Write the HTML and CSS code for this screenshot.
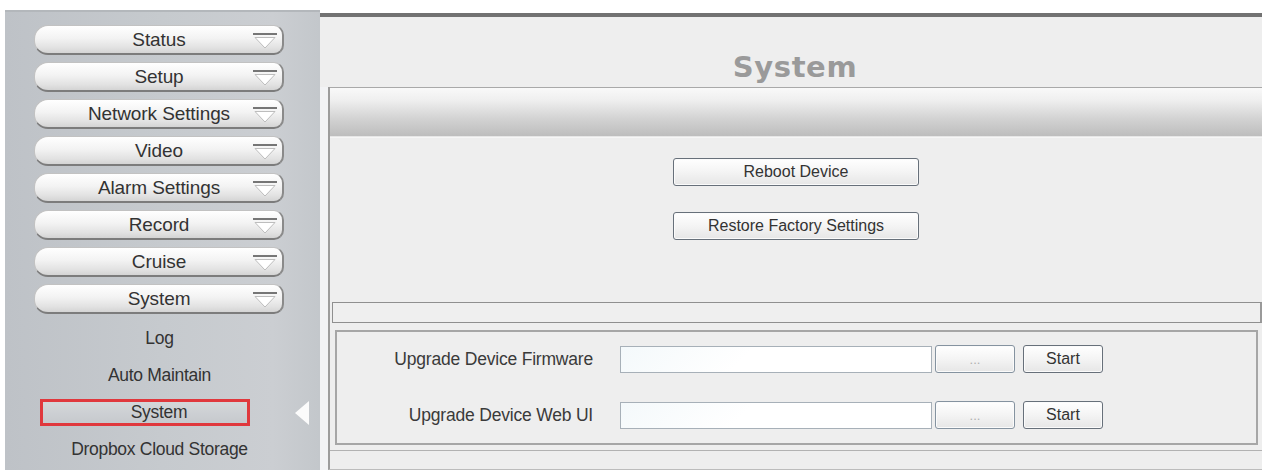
FILE: index.html
```html
<!DOCTYPE html>
<html>
<head>
<meta charset="utf-8">
<title>System</title>
<link rel="stylesheet" href="styles.css">
</head>
<body>
<div class="layout">
  <nav class="sidebar">
    <div class="menu">
      <div class="menu-btn"><span class="menu-label">Status</span><svg class="menu-ico" viewBox="0 0 24 16" width="24" height="16"><line x1="0" y1="1" x2="24" y2="1" stroke="#555" stroke-width="1.6"/><polygon points="2,4.5 22,4.5 12,15" fill="#fff" stroke="#bdbdbd" stroke-width="1"/></svg></div>
      <div class="menu-btn"><span class="menu-label">Setup</span><svg class="menu-ico" viewBox="0 0 24 16" width="24" height="16"><line x1="0" y1="1" x2="24" y2="1" stroke="#555" stroke-width="1.6"/><polygon points="2,4.5 22,4.5 12,15" fill="#fff" stroke="#bdbdbd" stroke-width="1"/></svg></div>
      <div class="menu-btn"><span class="menu-label">Network Settings</span><svg class="menu-ico" viewBox="0 0 24 16" width="24" height="16"><line x1="0" y1="1" x2="24" y2="1" stroke="#555" stroke-width="1.6"/><polygon points="2,4.5 22,4.5 12,15" fill="#fff" stroke="#bdbdbd" stroke-width="1"/></svg></div>
      <div class="menu-btn"><span class="menu-label">Video</span><svg class="menu-ico" viewBox="0 0 24 16" width="24" height="16"><line x1="0" y1="1" x2="24" y2="1" stroke="#555" stroke-width="1.6"/><polygon points="2,4.5 22,4.5 12,15" fill="#fff" stroke="#bdbdbd" stroke-width="1"/></svg></div>
      <div class="menu-btn"><span class="menu-label">Alarm Settings</span><svg class="menu-ico" viewBox="0 0 24 16" width="24" height="16"><line x1="0" y1="1" x2="24" y2="1" stroke="#555" stroke-width="1.6"/><polygon points="2,4.5 22,4.5 12,15" fill="#fff" stroke="#bdbdbd" stroke-width="1"/></svg></div>
      <div class="menu-btn"><span class="menu-label">Record</span><svg class="menu-ico" viewBox="0 0 24 16" width="24" height="16"><line x1="0" y1="1" x2="24" y2="1" stroke="#555" stroke-width="1.6"/><polygon points="2,4.5 22,4.5 12,15" fill="#fff" stroke="#bdbdbd" stroke-width="1"/></svg></div>
      <div class="menu-btn"><span class="menu-label">Cruise</span><svg class="menu-ico" viewBox="0 0 24 16" width="24" height="16"><line x1="0" y1="1" x2="24" y2="1" stroke="#555" stroke-width="1.6"/><polygon points="2,4.5 22,4.5 12,15" fill="#fff" stroke="#bdbdbd" stroke-width="1"/></svg></div>
      <div class="menu-btn"><span class="menu-label">System</span><svg class="menu-ico" viewBox="0 0 24 16" width="24" height="16"><line x1="0" y1="1" x2="24" y2="1" stroke="#555" stroke-width="1.6"/><polygon points="2,4.5 22,4.5 12,15" fill="#fff" stroke="#bdbdbd" stroke-width="1"/></svg></div>
    </div>
    <div class="submenu">
      <div class="sub-item">Log</div>
      <div class="sub-item">Auto Maintain</div>
      <div class="sub-item sub-row">
        <div class="sub-active">System</div>
        <svg class="pointer" viewBox="0 0 14 26" width="14" height="26"><polygon points="0,13 14,1 14,25" fill="#fbfbfb"/></svg>
      </div>
      <div class="sub-item">Dropbox Cloud Storage</div>
    </div>
  </nav>
  <main class="main">
    <h1 class="title">System</h1>
    <div class="body">
      <div class="content">
        <div class="header-bar"></div>
        <section class="actions">
          <button class="btn btn-wide">Reboot Device</button>
          <button class="btn btn-wide">Restore Factory Settings</button>
        </section>
        <div class="bar"></div>
        <section class="upgrade">
          <div class="up-row">
            <span class="up-label">Upgrade Device Firmware</span>
            <input class="up-input" type="text">
            <button class="btn btn-browse">...</button>
            <button class="btn btn-start">Start</button>
          </div>
          <div class="up-row">
            <span class="up-label">Upgrade Device Web UI</span>
            <input class="up-input" type="text">
            <button class="btn btn-browse">...</button>
            <button class="btn btn-start">Start</button>
          </div>
        </section>
        <div class="foot"></div>
      </div>
    </div>
  </main>
</div>
</body>
</html>
```

FILE: styles.css
```css
* { box-sizing: border-box; }
html, body { margin: 0; padding: 0; background: #ffffff; }
body { font-family: "Liberation Sans", Arial, sans-serif; color: #333; }

.layout {
  display: flex;
  padding: 10px 0 0 5px;
  height: 470px;
}

/* Sidebar */
.sidebar {
  width: 315px;
  height: 460px;
  border-top: 2px solid #b3b7bb;
  background: linear-gradient(90deg, #bec2c7 0%, #c6cace 50%, #cbced2 85%, #c3c7cb 100%);
  padding: 13px 0 0 0;
  display: flex;
  flex-direction: column;
}
.menu {
  display: flex;
  flex-direction: column;
  gap: 7px;
  padding-left: 29px;
}
.menu-btn {
  width: 250px;
  height: 30px;
  border-radius: 14px 10px 10px 14px;
  background: linear-gradient(180deg, #ffffff 0%, #f3f3f3 45%, #e2e2e2 80%, #d4d4d4 100%);
  border: 1px solid #c2c2c2;
  border-bottom: 2px solid #7c7c7c;
  border-right: 2px solid #8a8a8a;
  display: flex;
  align-items: center;
}
.menu-label {
  flex: 1;
  text-align: center;
  font-size: 19px;
  color: #333;
  padding-left: 34px;
  letter-spacing: -0.1px;
}
.menu-ico {
  flex: none;
  margin: 0 5px 0 4px;
  align-self: flex-start;
  margin-top: 7px;
}
.submenu {
  display: flex;
  flex-direction: column;
  margin-top: 6px;
}
.sub-item {
  height: 37px;
  width: 315px;
  display: flex;
  align-items: center;
  justify-content: center;
  padding-right: 6px;
  font-size: 17.5px;
  color: #333;
  letter-spacing: -0.3px;
}
.sub-row {
  justify-content: space-between;
  padding-left: 35px;
  padding-right: 11px;
}
.sub-active {
  width: 210px;
  height: 27px;
  border: 3px solid #e0383d;
  display: flex;
  align-items: center;
  justify-content: center;
  padding-left: 28px;
  font-size: 17.5px;
  color: #333;
  background: linear-gradient(180deg, #d4d7da, #c6c9cd);
}
.pointer { flex: none; }

/* Main */
.main {
  width: 942px;
  height: 457px;
  margin-top: 3px;
  border-top: 4px solid #727272;
  background: #eeeeee;
  display: flex;
  flex-direction: column;
}
.title {
  margin: 0;
  height: 70px;
  padding-top: 36px;
  padding-left: 8px;
  text-align: center;
  font-family: "DejaVu Sans", Verdana, sans-serif;
  font-weight: bold;
  font-size: 29px;
  line-height: 29px;
  color: #9a9a9a;
  letter-spacing: 0.6px;
}
.body {
  flex: 1;
  display: flex;
  padding-left: 8px;
  background: #f2f3f5;
}
.content {
  flex: 1;
  display: flex;
  flex-direction: column;
  background: #eeeeee;
  border-left: 2px solid #9c9c9c;
  border-bottom: 1px solid #bcbcbc;
}
.header-bar {
  height: 50px;
  border-top: 1px solid #a9a9a9;
  border-bottom: 1px solid #e6e6e6;
  background: linear-gradient(180deg, #f9f9f9 0%, #efefef 25%, #d2d2d2 65%, #bdbdbd 100%);
}
.actions {
  height: 165px;
  display: flex;
  flex-direction: column;
  align-items: center;
  gap: 26px;
  padding-top: 20px;
  border-top: 1px solid #f6f6f6;
}
.btn {
  font-family: "Liberation Sans", Arial, sans-serif;
  font-size: 16px;
  color: #333;
  height: 28px;
  border: 1px solid #67707a;
  border-radius: 3px;
  background: linear-gradient(180deg, #ffffff 0%, #f4f4f4 50%, #e6e6e6 100%);
  padding: 0;
  box-shadow: inset 0 0 0 1px #fbfbfb;
}
.btn-wide { width: 246px; }
.bar {
  height: 21px;
  margin-left: 2px;
  border: 1px solid #8f8f8f;
  border-right: 2px solid #9a9a9a;
  background: #efefef;
}
.upgrade {
  margin: 7px 4px 0 5px;
  height: 115px;
  border: 2px solid #a6a6a6;
  padding-top: 13px;
  display: flex;
  flex-direction: column;
  gap: 28px;
}
.up-row {
  display: flex;
  align-items: center;
  height: 28px;
}
.up-label {
  width: 256px;
  text-align: right;
  font-size: 17.5px;
  color: #3a3a3a;
  margin-right: 27px;
  letter-spacing: -0.2px;
}
.up-input {
  width: 312px;
  height: 27px;
  border: 1px solid #a7b0b8;
  background: linear-gradient(135deg, #f4f9fb, #ffffff 40%);
  margin: 0 3px 0 0;
}
.btn-browse {
  width: 80px;
  color: #b0b0b0;
  font-size: 13px;
  border-color: #8593a0;
  margin-right: 8px;
}
.btn-start { width: 80px; }
.foot {
  flex: 1;
  margin-top: 5px;
  border-top: 1px solid #b2b2b2;
}
```
